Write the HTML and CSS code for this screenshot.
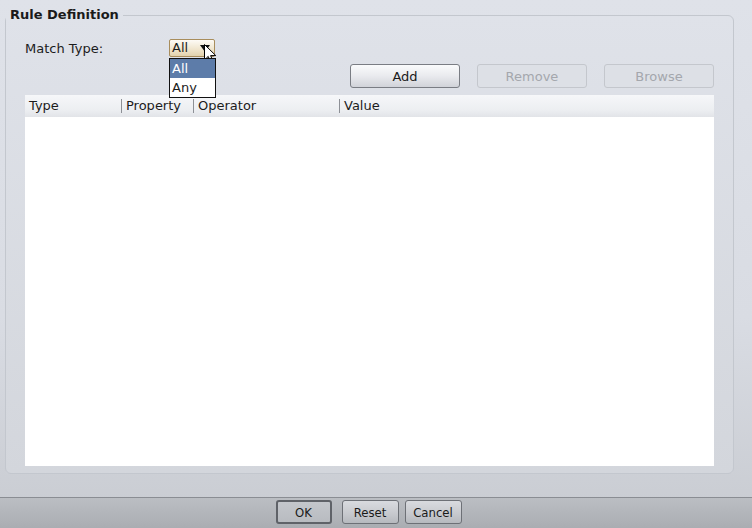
FILE: index.html
```html
<!DOCTYPE html>
<html lang="en">
  <head>
    <meta charset="UTF-8" />
    <title>Rule Definition</title>
    <link rel="stylesheet" href="styles.css">
  </head>
  <body>
    <div class="content">
      <fieldset class="rule-box">
        <legend>Rule Definition</legend>
        <div class="match-row">
          <label class="match-label">Match Type:</label>
          <div class="combo">
            <span class="combo-text">All</span>
            <span class="combo-arrow"></span>
            <svg class="cursor" width="13" height="20" viewBox="0 0 13 20">
              <path d="M0.5 0.5 L0.5 16 L4.2 12.4 L6.8 18.8 L9.2 17.8 L6.6 11.6 L11.8 11.6 Z" fill="#fff" stroke="#000" stroke-width="1"/>
            </svg>
            <ul class="combo-list">
              <li class="selected">All</li>
              <li>Any</li>
            </ul>
          </div>
        </div>

        <div class="button-row">
          <button class="btn">Add</button>
          <button class="btn" disabled>Remove</button>
          <button class="btn" disabled>Browse</button>
        </div>

        <div class="rule-table">
          <div class="table-head">
            <div class="col col-type">Type</div>
            <div class="col col-prop">Property</div>
            <div class="col col-op">Operator</div>
            <div class="col col-value">Value</div>
          </div>
          <div class="table-body"></div>
        </div>
      </fieldset>
    </div>

    <div class="footer">
      <button class="foot-btn default">OK</button>
      <button class="foot-btn">Reset</button>
      <button class="foot-btn">Cancel</button>
    </div>
  </body>
</html>
```

FILE: styles.css
```css
html,
body {
  margin: 0;
  height: 100%;
}
body {
  font-family: "DejaVu Sans", "Liberation Sans", sans-serif;
  font-size: 13px;
  color: #1c1c1c;
  background: linear-gradient(#dfe2e9, #d9dce3 60%, #c8cbd1);
  display: flex;
  flex-direction: column;
  overflow: hidden;
}
.content {
  flex: 1;
}
.rule-box {
  margin: 7px 18px 0 5px;
  padding: 16px 19px 7px 19px;
  border: 1px solid #c3c7ce;
  border-radius: 6px;
  background: linear-gradient(#dfe2e9, #d3d6dc);
}
.rule-box legend {
  font-weight: bold;
  line-height: 16px;
  padding: 0 4px;
  margin-left: -19px;
  color: #1a1a1a;
}
.match-row {
  display: flex;
  align-items: center;
  height: 18px;
}
.match-label {
  width: 144px;
}
.combo {
  position: relative;
  width: 44px;
  height: 16px;
  border: 1px solid #a88d5c;
  border-radius: 2px;
  background: linear-gradient(#fdfbf6, #efe4cb 60%, #e2d2ad);
  line-height: 16px;
}
.combo-text {
  padding-left: 2px;
}
.combo-arrow {
  position: absolute;
  right: 4px;
  top: 5px;
  border-left: 5px solid transparent;
  border-right: 5px solid transparent;
  border-top: 7px solid #111;
}
.cursor {
  position: absolute;
  left: 34px;
  top: 4px;
}
.combo-list {
  position: absolute;
  left: -1px;
  top: 18px;
  width: 45px;
  margin: 0;
  padding: 0;
  list-style: none;
  border: 1px solid #111;
  background: #fff;
}
.combo-list li {
  height: 19px;
  line-height: 19px;
  padding-left: 2px;
}
.combo-list li.selected {
  background: #5d7ca9;
  color: #fff;
}
.button-row {
  display: flex;
  justify-content: flex-end;
  gap: 17px;
  margin-top: 7px;
}
.btn {
  width: 110px;
  height: 24px;
  font: inherit;
  color: #1a1a1a;
  border: 1px solid #7a7d84;
  border-radius: 3px;
  background: linear-gradient(#fafbfc, #e9eaee 50%, #d1d3d9);
}
.btn:disabled {
  color: #a4a7ad;
  border-color: #c4c7cd;
  background: #dde0e6;
}
.rule-table {
  margin-top: 7px;
  background: #fff;
}
.table-head {
  display: flex;
  height: 22px;
  align-items: center;
  background: linear-gradient(#f6f7f9, #eceef1 70%, #e2e4e8);
}
.col {
  height: 14px;
  line-height: 14px;
  padding-left: 4px;
  border-left: 1px solid #8d9096;
}
.col-type {
  width: 92px;
  border-left: none;
}
.col-prop {
  width: 67px;
}
.col-op {
  width: 141px;
}
.col-value {
  flex: 1;
}
.table-body {
  height: 349px;
  background: #fff;
}
.footer {
  height: 31px;
  border-top: 1px solid #8a8d93;
  background: linear-gradient(#bbbec3, #aaadb2);
  display: flex;
  justify-content: center;
  align-items: flex-start;
  gap: 6px;
  padding: 2px 15px 0 0;
  box-sizing: border-box;
}
.foot-btn {
  height: 24px;
  width: 57px;
  font-family: "DejaVu Sans Condensed", "DejaVu Sans", sans-serif;
  font-stretch: condensed;
  font-size: 13px;
  color: #1a1a1a;
  border: 1px solid #6d7076;
  border-radius: 3px;
  background: linear-gradient(#d9dbdf, #c6c8cd 60%, #b6b9be);
}
.foot-btn.default {
  width: 56px;
  border: 2px solid #5f6268;
  background: linear-gradient(#c4c7cc, #b8bbc0);
  margin-right: 4px;
}
```
